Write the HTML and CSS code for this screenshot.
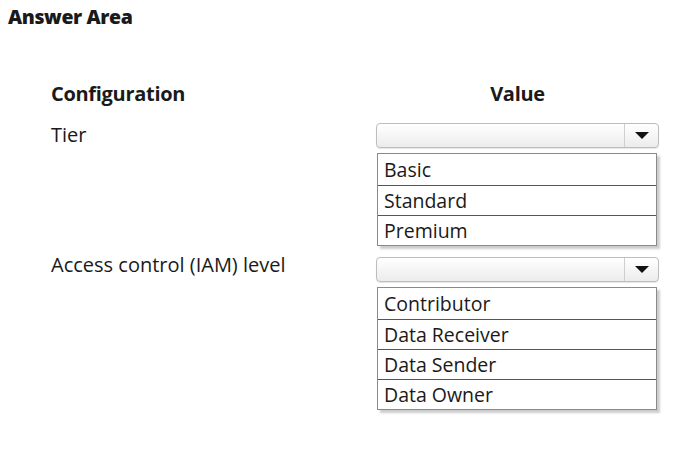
FILE: index.html
```html
<!DOCTYPE html>
<html lang="en">
<head>
  <meta charset="UTF-8">
  <title>Answer Area</title>
  <link rel="stylesheet" href="styles.css">
</head>
<body>
<div class="answer">
  <h1 class="answer-title">Answer Area</h1>

  <div class="config-table">
    <div class="head">Configuration</div>
    <div class="head head-value">Value</div>

    <div class="label">Tier</div>
    <div class="dropdown">
      <div class="select">
        <span class="select-value"></span>
        <span class="select-btn"><span class="arrow"></span></span>
      </div>
      <ul class="options">
        <li>Basic</li>
        <li>Standard</li>
        <li>Premium</li>
      </ul>
    </div>

    <div class="label label-tight">Access control (IAM) level</div>
    <div class="dropdown">
      <div class="select">
        <span class="select-value"></span>
        <span class="select-btn"><span class="arrow"></span></span>
      </div>
      <ul class="options">
        <li>Contributor</li>
        <li>Data Receiver</li>
        <li>Data Sender</li>
        <li>Data Owner</li>
      </ul>
    </div>
  </div>
</div>
</body>
</html>
```

FILE: styles.css
```css
body {
  font-family: "Open Sans", "Noto Sans", sans-serif;
  color: #1a1a1a;
  background-color: #fff;
  margin: 0;
  padding: 0;
}
.answer {
  padding: 5px 8px;
}
.answer-title {
  font-size: 19.5px;
  font-weight: 800;
  letter-spacing: -0.4px;
  margin: 0;
  line-height: 24px;
}
.config-table {
  display: grid;
  grid-template-columns: 325px 283px;
  margin-top: 53px;
  margin-left: 43px;
}
.head {
  font-size: 20px;
  font-weight: 700;
  letter-spacing: -0.3px;
  line-height: 24px;
  height: 41px;
}
.head-value {
  text-align: center;
}
.label {
  font-size: 20px;
  line-height: 16px;
  padding-top: 4px;
}
.label-tight {
  padding-top: 0;
}
.dropdown {
  margin-bottom: 11px;
}
.select {
  display: flex;
  height: 25px;
  box-sizing: border-box;
  border: 1px solid #bdbdbd;
  border-radius: 4px;
  background: linear-gradient(#ffffff, #ececec);
  box-shadow: 0 1px 1px rgba(0, 0, 0, 0.1);
}
.select-value {
  flex: 1;
}
.select-btn {
  width: 33px;
  border-left: 1px solid #cfcfcf;
  display: flex;
  align-items: center;
  justify-content: center;
}
.arrow {
  width: 0;
  height: 0;
  border-left: 7px solid transparent;
  border-right: 7px solid transparent;
  border-top: 7px solid #111;
}
.options {
  list-style: none;
  margin: 5px 2px 0 1px;
  padding: 0;
  border: 1px solid #8a8a8a;
  background-color: #fff;
  box-shadow: 3px 3px 2px rgba(0, 0, 0, 0.2);
}
.options li {
  font-size: 19.5px;
  line-height: 29px;
  padding-left: 6px;
  border-top: 1px solid #555;
}
.options li:first-child {
  border-top: none;
  line-height: 31px;
}
```
